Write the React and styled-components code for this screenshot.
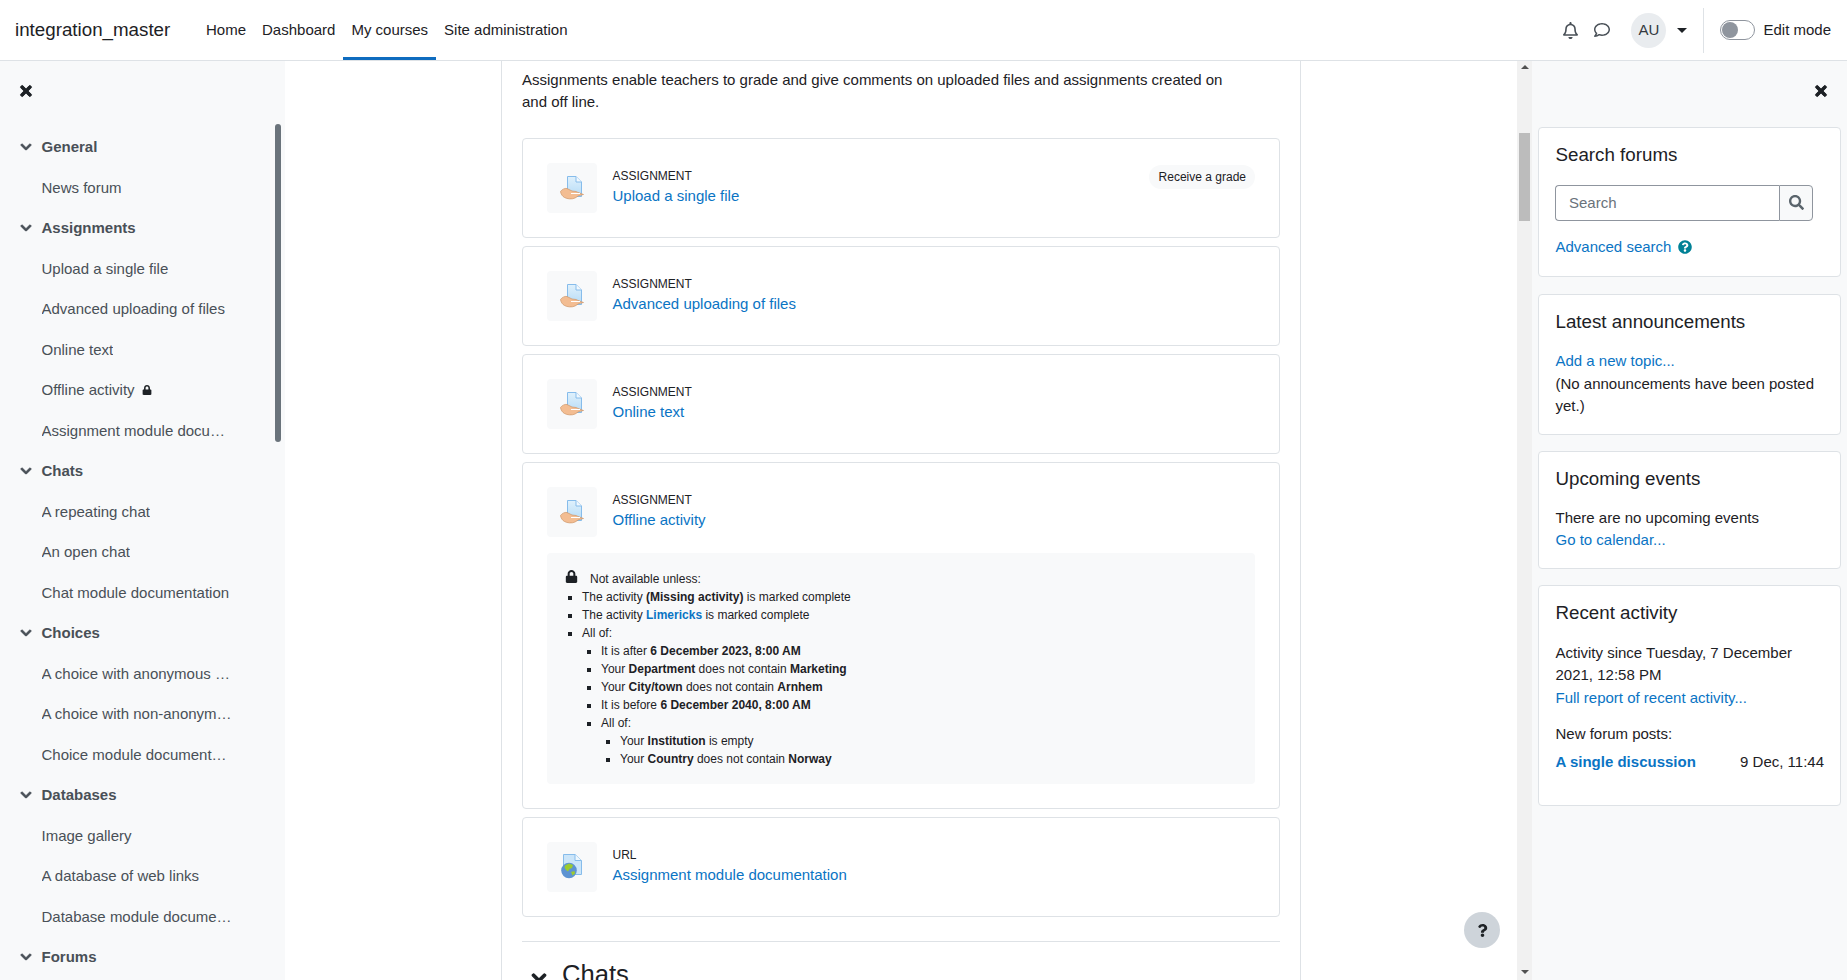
import React from 'react';
import styled, { createGlobalStyle } from 'styled-components';
import {
  FaTimes,
  FaChevronDown,
  FaLock,
  FaRegBell,
  FaRegComment,
  FaSearch,
  FaQuestionCircle,
  FaQuestion,
} from 'react-icons/fa';

// Global
const GlobalStyle = createGlobalStyle`
  html, body {
    margin: 0;
    height: 100%;
    overflow: hidden;
    background: #fff;
    color: #1d2125;
    font-family: "Liberation Sans", Arial, sans-serif;
    font-size: 15px;
    line-height: 22.5px;
  }
  * { box-sizing: border-box; }
`;

const Page = styled.div`
  height: 980px;
  display: flex;
  flex-direction: column;
  overflow: hidden;
`;

const Link = styled.a`
  color: #0a74c4;
  text-decoration: none;
  font-weight: ${(p) => (p.$bold ? 700 : 400)};
`;

// Top bar
const Navbar = styled.header`
  height: 61px;
  flex: none;
  display: flex;
  align-items: stretch;
  border-bottom: 1px solid #dee2e6;
  padding-left: 15px;
`;

const Brand = styled.div`
  font-size: 18.75px;
  align-self: center;
  width: 183px;
`;

const NavList = styled.nav`
  display: flex;
  align-items: stretch;
`;

const NavItem = styled.a`
  display: flex;
  align-items: center;
  padding: 3px 8px 0;
  color: #1d2125;
  border-bottom: 3px solid ${(p) => (p.$active ? '#0f6cbf' : 'transparent')};
`;

const NavRight = styled.div`
  margin-left: auto;
  display: flex;
  align-items: center;
  padding-right: 16px;
`;

const NavIcon = styled.span`
  display: flex;
  color: #495057;
  font-size: ${(p) => p.$size}px;
  margin-right: ${(p) => p.$gap}px;
`;

const Avatar = styled.div`
  width: 35px;
  height: 35px;
  border-radius: 50%;
  background: #e9ecef;
  display: flex;
  align-items: center;
  justify-content: center;
  font-size: 15px;
  color: #343a40;
`;

const Caret = styled.span`
  width: 0;
  height: 0;
  margin-left: 11px;
  border-left: 5px solid transparent;
  border-right: 5px solid transparent;
  border-top: 5px solid #1d2125;
`;

const NavDivider = styled.div`
  width: 1px;
  height: 45px;
  background: #dee2e6;
  margin: 0 16px;
`;

const Toggle = styled.div`
  width: 35px;
  height: 20px;
  border: 1px solid #8f959e;
  border-radius: 10px;
  padding: 1px;
  background: #fff;
  margin-right: 8px;
`;

const ToggleKnob = styled.div`
  width: 16px;
  height: 16px;
  border-radius: 50%;
  background: #8f959e;
`;

// Columns
const Body = styled.div`
  flex: 1;
  min-height: 0;
  display: flex;
`;

const Drawer = styled.aside`
  position: relative;
  flex: none;
  width: ${(p) => p.$width}px;
  background: #f8f9fa;
  overflow: hidden;
`;

const CloseRow = styled.div`
  height: 59px;
  display: flex;
  align-items: center;
  justify-content: ${(p) => (p.$right ? 'flex-end' : 'flex-start')};
  padding-left: 17.5px;
  padding-right: 18px;
  font-size: 16px;
  color: #1d2125;
  svg { stroke: currentColor; stroke-width: 30; }
`;

const DrawerThumb = styled.div`
  position: absolute;
  top: 63px;
  left: 275px;
  width: 6px;
  height: 318px;
  border-radius: 3px;
  background: #6a737b;
`;

const IndexList = styled.div`
  padding-top: 7px;
`;

const SectionRow = styled.div`
  height: 40.5px;
  display: flex;
  align-items: center;
  padding-left: 20px;
  font-weight: 700;
  color: #495057;
`;

const SectionChevron = styled.span`
  display: flex;
  width: 21.5px;
  font-size: 12px;
  color: #495057;
  svg { stroke: currentColor; stroke-width: 40; }
`;

const IndexRow = styled.div`
  height: 40.5px;
  display: flex;
  align-items: center;
  padding-left: 41.5px;
  color: #495057;
`;

const IndexLabel = styled.span`
  overflow: hidden;
  white-space: nowrap;
  text-overflow: ellipsis;
  max-width: 192px;
`;

const IndexLock = styled.span`
  display: flex;
  margin-left: 7px;
  font-size: 10px;
  color: #1d2125;
`;

// Middle column
const MainArea = styled.main`
  position: relative;
  flex: 1;
  min-width: 0;
  display: flex;
  overflow: hidden;
`;

const MainColumn = styled.div`
  width: 800px;
  margin-left: 216px;
  padding: 7.5px 20px 0;
  border-left: 1px solid #dee2e6;
  border-right: 1px solid #dee2e6;
  overflow: hidden;
`;

const Intro = styled.p`
  margin: 0 0 24px;
  max-width: 705px;
`;

const ActivityCard = styled.section`
  border: 1px solid #dee2e6;
  border-radius: 4px;
  padding: 24px;
  margin-bottom: 8px;
`;

const ActivityHead = styled.div`
  display: flex;
  align-items: flex-start;
`;

const IconBox = styled.div`
  width: 50px;
  height: 50px;
  flex: none;
  border-radius: 4px;
  background: #f8f9fa;
  display: flex;
  align-items: center;
  justify-content: center;
  margin-right: 15.5px;
`;

const ActivityText = styled.div`
  padding-top: 4px;
`;

const ActivityType = styled.div`
  font-size: 12px;
  line-height: 18px;
  text-transform: uppercase;
`;

const Badge = styled.span`
  margin-left: auto;
  margin-top: 2px;
  padding: 3px 9px 3px 10px;
  border-radius: 12px;
  background: #f8f9fa;
  font-size: 12px;
  line-height: 18px;
`;

const Restriction = styled.div`
  margin-top: 16px;
  padding: 17px 16px 16px;
  border-radius: 4px;
  background: #f8f9fa;
  font-size: 12px;
  line-height: 18px;
`;

const RestrictionLead = styled.div`
  display: flex;
  align-items: center;
  font-size: 12px;
`;

const RestrictionLock = styled.span`
  display: flex;
  font-size: 13px;
  width: 27px;
  padding-left: 2px;
  margin-top: -4px;
`;

const Conditions = styled.ul`
  margin: 0;
  padding-left: 19px;
  list-style-type: square;
`;

const SectionDivider = styled.hr`
  border: 0;
  border-top: 1px solid #dee2e6;
  margin: 24px 0 0;
`;

const ChatsHeading = styled.h3`
  margin: 13px 0 0;
  display: flex;
  align-items: center;
  font-size: 25.6px;
  line-height: 38px;
  font-weight: 400;
`;

const HeadingChevron = styled.span`
  display: flex;
  width: 31px;
  margin-left: 9px;
  font-size: 16px;
  margin-top: 8px;
  svg { stroke: currentColor; stroke-width: 40; }
`;

const HelpButton = styled.div`
  position: absolute;
  left: 1179px;
  top: 851px;
  width: 36px;
  height: 36px;
  border-radius: 50%;
  background: #ced4da;
  color: #1d2125;
  display: flex;
  align-items: center;
  justify-content: center;
  font-size: 13px;
`;

const ScrollTrack = styled.div`
  width: 15px;
  flex: none;
  margin-left: auto;
  background: #f1f1f1;
  display: flex;
  flex-direction: column;
  align-items: center;
`;

const ScrollArrow = styled.span`
  width: 0;
  height: 0;
  border-left: 4px solid transparent;
  border-right: 4px solid transparent;
  ${(p) =>
    p.$down
      ? `border-top: 4px solid #505050; margin-top: auto; margin-bottom: 6px;`
      : `border-bottom: 4px solid #505050; margin-top: 4px;`}
`;

const ScrollThumb = styled.div`
  width: 11px;
  height: 88px;
  margin-top: 64px;
  background: #bcbcbc;
`;

// Right column
const Blocks = styled.div`
  padding: 0 6px;
  display: flex;
  flex-direction: column;
  gap: 16.5px;
  margin-top: 7px;
`;

const Block = styled.section`
  background: #fff;
  border: 1px solid #dee2e6;
  border-radius: 4px;
  padding: 16px 16px ${(p) => p.$bottom || 16}px 16.5px;
`;

const BlockTitle = styled.h5`
  margin: 0 0 ${(p) => p.$gap || 16}px;
  font-size: 18.75px;
  line-height: 22.5px;
  font-weight: 400;
`;

const SearchGroup = styled.div`
  display: flex;
  height: 36px;
  width: 258px;
  margin: 18px 0 15px -0.5px;
`;

const SearchInput = styled.input`
  flex: 1;
  min-width: 0;
  height: 36px;
  padding: 0 13px;
  border: 1px solid #8f959e;
  border-right: 0;
  border-radius: 4px 0 0 4px;
  font: inherit;
  background: #fff;
  &::placeholder { color: #6a737b; opacity: 1; }
`;

const SearchButton = styled.div`
  width: 34px;
  flex: none;
  border: 1px solid #8f959e;
  border-radius: 0 4px 4px 0;
  background: #f8f9fa;
  display: flex;
  align-items: center;
  justify-content: center;
  color: #5a646c;
  font-size: 15px;
`;

const HelpIcon = styled.span`
  display: inline-flex;
  vertical-align: -2px;
  margin-left: 7px;
  color: #008196;
  font-size: 14px;
`;

const TextLine = styled.div`
  margin-top: ${(p) => p.$top || 0}px;
`;

const PostRow = styled.div`
  display: flex;
  justify-content: space-between;
  margin-top: 5.5px;
  margin-bottom: 16px;
`;

// Drawings
const AssignIcon = () => (
  <svg width="24" height="24" viewBox="0 0 24 24">
    <defs>
      <linearGradient id="docFill" x1="0" y1="0" x2="0" y2="1">
        <stop offset="0" stopColor="#e0f1fc" />
        <stop offset="1" stopColor="#b5dbf6" />
      </linearGradient>
    </defs>
    <path d="M7.5.5H16L21.500 6v14.500h-14z" fill="url(#docFill)" stroke="#86bceb" />
    <path d="M16 .5V6h5.500" fill="#f2f9fe" stroke="#86bceb" />
    <path d="M.5 15.500C2 13.500 4.500 12 7 12.500l5 2.500 4 .5c2 1 5 2 7.500 3l-4.500 1-4 2.500c-3 1.500-8 1-10.500-.5C2.500 20.500.8 18 .5 15.500z" fill="#f3bd92" stroke="#cf9566" strokeWidth=".7" />
    <path d="M11 17.500h9" stroke="#fff" strokeWidth="1" />
  </svg>
);

const UrlIcon = () => (
  <svg width="24" height="25" viewBox="0 0 24 25">
    <path d="M3.500.5H15L21.500 6.500V20.500H3.500z" fill="#cbe5f9" stroke="#86bceb" />
    <path d="M15 .5V6.500h6.500" fill="#eef7fd" stroke="#86bceb" />
    <circle cx="9" cy="16.500" r="7.800" fill="#5c93d2" />
    <path d="M5 11.500l4-2 4 1.500-1 3-2.500 1-1.500 2.500-2-1.500-1.500-2.500zM11 18l3.500-1 .5 2.500-2.500 2z" fill="#9ccb2f" />
  </svg>
);

const sections = [
  { title: 'General', items: ['News forum'] },
  {
    title: 'Assignments',
    items: [
      'Upload a single file',
      'Advanced uploading of files',
      'Online text',
      { label: 'Offline activity', locked: true },
      'Assignment module documentation',
    ],
  },
  { title: 'Chats', items: ['A repeating chat', 'An open chat', 'Chat module documentation'] },
  {
    title: 'Choices',
    items: [
      'A choice with anonymous responses',
      'A choice with non-anonymous responses',
      'Choice module documentation',
    ],
  },
  {
    title: 'Databases',
    items: ['Image gallery', 'A database of web links', 'Database module documentation'],
  },
  { title: 'Forums', items: [] },
];

const CourseIndex = () => (
  <IndexList>
    {sections.map((s) => (
      <React.Fragment key={s.title}>
        <SectionRow>
          <SectionChevron><FaChevronDown /></SectionChevron>
          {s.title}
        </SectionRow>
        {s.items.map((item) => {
          const label = item.label || item;
          return (
            <IndexRow key={label}>
              <IndexLabel>{label}</IndexLabel>
              {item.locked && <IndexLock><FaLock /></IndexLock>}
            </IndexRow>
          );
        })}
      </React.Fragment>
    ))}
  </IndexList>
);

const Activity = ({ type = 'Assignment', name, icon = <AssignIcon />, badge, children }) => (
  <ActivityCard>
    <ActivityHead>
      <IconBox>{icon}</IconBox>
      <ActivityText>
        <ActivityType>{type}</ActivityType>
        <Link href="#">{name}</Link>
      </ActivityText>
      {badge && <Badge>{badge}</Badge>}
    </ActivityHead>
    {children}
  </ActivityCard>
);

const App = () => (
  <Page>
    <GlobalStyle />
    <Navbar>
      <Brand>integration_master</Brand>
      <NavList>
        <NavItem>Home</NavItem>
        <NavItem>Dashboard</NavItem>
        <NavItem $active>My courses</NavItem>
        <NavItem>Site administration</NavItem>
      </NavList>
      <NavRight>
        <NavIcon $size={17} $gap={15}><FaRegBell /></NavIcon>
        <NavIcon $size={16} $gap={21}><FaRegComment /></NavIcon>
        <Avatar>AU</Avatar>
        <Caret />
        <NavDivider />
        <Toggle><ToggleKnob /></Toggle>
        <span>Edit mode</span>
      </NavRight>
    </Navbar>

    <Body>
      <Drawer $width={285}>
        <CloseRow><FaTimes /></CloseRow>
        <CourseIndex />
        <DrawerThumb />
      </Drawer>

      <MainArea>
        <MainColumn>
          <Intro>
            Assignments enable teachers to grade and give comments on uploaded files and
            assignments created on and off line.
          </Intro>
          <Activity name="Upload a single file" badge="Receive a grade" />
          <Activity name="Advanced uploading of files" />
          <Activity name="Online text" />
          <Activity name="Offline activity">
            <Restriction>
              <RestrictionLead>
                <RestrictionLock><FaLock /></RestrictionLock>
                Not available unless:
              </RestrictionLead>
              <Conditions>
                <li>The activity <b>(Missing activity)</b> is marked complete</li>
                <li>The activity <Link href="#" $bold>Limericks</Link> is marked complete</li>
                <li>
                  All of:
                  <Conditions>
                    <li>It is after <b>6 December 2023, 8:00 AM</b></li>
                    <li>Your <b>Department</b> does not contain <b>Marketing</b></li>
                    <li>Your <b>City/town</b> does not contain <b>Arnhem</b></li>
                    <li>It is before <b>6 December 2040, 8:00 AM</b></li>
                    <li>
                      All of:
                      <Conditions>
                        <li>Your <b>Institution</b> is empty</li>
                        <li>Your <b>Country</b> does not contain <b>Norway</b></li>
                      </Conditions>
                    </li>
                  </Conditions>
                </li>
              </Conditions>
            </Restriction>
          </Activity>
          <Activity type="URL" name="Assignment module documentation" icon={<UrlIcon />} />
          <SectionDivider />
          <ChatsHeading>
            <HeadingChevron><FaChevronDown /></HeadingChevron>
            Chats
          </ChatsHeading>
        </MainColumn>
        <HelpButton><FaQuestion /></HelpButton>
        <ScrollTrack>
          <ScrollArrow />
          <ScrollThumb />
          <ScrollArrow $down />
        </ScrollTrack>
      </MainArea>

      <Drawer $width={315}>
        <CloseRow $right><FaTimes /></CloseRow>
        <Blocks>
          <Block $bottom={18}>
            <BlockTitle>Search forums</BlockTitle>
            <SearchGroup>
              <SearchInput placeholder="Search" />
              <SearchButton><FaSearch /></SearchButton>
            </SearchGroup>
            <Link href="#">Advanced search</Link>
            <HelpIcon><FaQuestionCircle /></HelpIcon>
          </Block>
          <Block>
            <BlockTitle $gap={17}>Latest announcements</BlockTitle>
            <Link href="#">Add a new topic...</Link>
            <TextLine>(No announcements have been posted yet.)</TextLine>
          </Block>
          <Block>
            <BlockTitle>Upcoming events</BlockTitle>
            <TextLine>There are no upcoming events</TextLine>
            <Link href="#">Go to calendar...</Link>
          </Block>
          <Block>
            <BlockTitle $gap={17}>Recent activity</BlockTitle>
            <TextLine>Activity since Tuesday, 7 December 2021, 12:58 PM</TextLine>
            <Link href="#">Full report of recent activity...</Link>
            <TextLine $top={13.5}>New forum posts:</TextLine>
            <PostRow>
              <Link href="#" $bold>A single discussion</Link>
              <span>9 Dec, 11:44</span>
            </PostRow>
          </Block>
        </Blocks>
      </Drawer>
    </Body>
  </Page>
);

export default App;
